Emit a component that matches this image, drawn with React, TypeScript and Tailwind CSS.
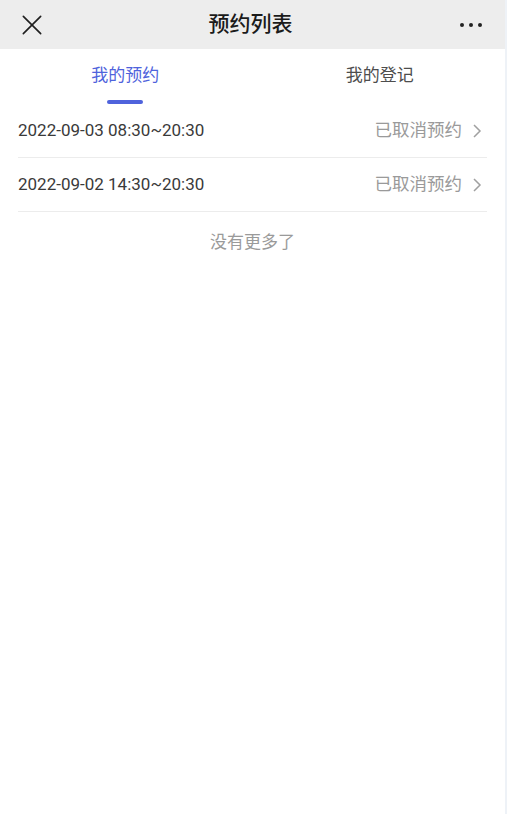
const rows = [
  { time: "2022-09-03 08:30~20:30", status: "已取消预约" },
  { time: "2022-09-02 14:30~20:30", status: "已取消预约" },
];

const font = "font-['Roboto','Noto_Sans_CJK_SC',sans-serif]";

export default function App() {
  return (
    <div className={`flex min-h-[814px] w-full bg-white ${font}`}>
      <div className="flex flex-1 flex-col">
        {/* Top bar */}
        <div className="flex h-[49px] items-center justify-between bg-[#ededed] pl-[19px] pr-[23px]">
          <svg width="26" height="26" viewBox="0 0 24 24" fill="none" stroke="#1f1f1f" strokeWidth="1.5" strokeLinecap="round">
            <path d="M4 4L20 20M20 4L4 20" />
          </svg>
          <div className="text-[21px] font-medium text-[#1b1b1b]">预约列表</div>
          <div className="flex w-[26px] items-center justify-end gap-[5px]">
            <span className="h-[4px] w-[4px] rounded-full bg-[#222]" />
            <span className="h-[4px] w-[4px] rounded-full bg-[#222]" />
            <span className="h-[4px] w-[4px] rounded-full bg-[#222]" />
          </div>
        </div>

        {/* Tabs */}
        <div className="flex h-[55px]">
          <div className="flex flex-1 flex-col items-center pr-[4px] pt-[15px]">
            <span className="text-[17px] leading-[22px] text-[#4f63dc]">我的预约</span>
            <span className="mt-[14px] h-[4px] w-[36px] rounded-full bg-[#4f63dc]" />
          </div>
          <div className="flex flex-1 flex-col items-center pt-[15px]">
            <span className="text-[17px] leading-[22px] text-[#4d4d4d]">我的登记</span>
          </div>
        </div>

        {/* List */}
        <div className="px-[18px]">
          {rows.map((r) => (
            <div key={r.time} className="flex h-[54px] items-center justify-between border-b border-[#ececec]">
              <span className="text-[17px] text-[#3a3a3a]">{r.time}</span>
              <div className="flex items-center gap-[9px] pr-[4px]">
                <span className="text-[17.5px] text-[#9a9a9a]">{r.status}</span>
                <svg width="12" height="16" viewBox="0 0 12 16" fill="none" stroke="#a0a0a0" strokeWidth="1.5">
                  <path d="M3 2L9 8L3 14" />
                </svg>
              </div>
            </div>
          ))}
        </div>

        <div className="pt-[18px] text-center text-[17px] text-[#9a9a9a]">没有更多了</div>
      </div>
      <div className="w-[2px] bg-[#eef2f7]" />
    </div>
  );
}
